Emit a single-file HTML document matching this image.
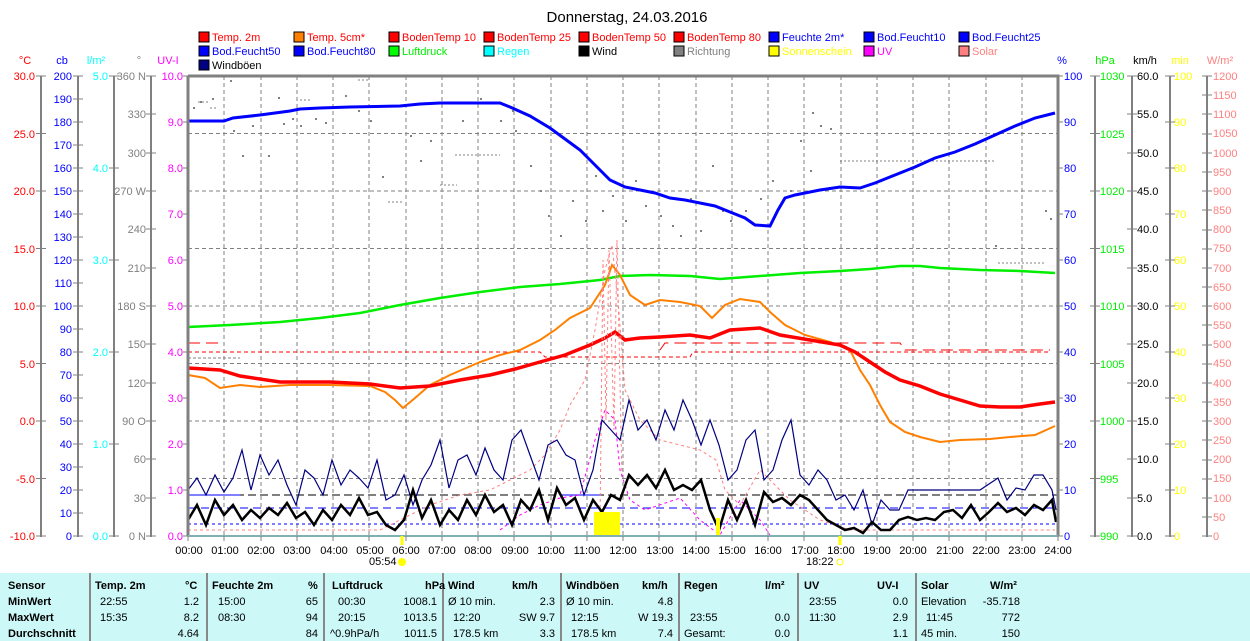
<!DOCTYPE html>
<html><head><meta charset="utf-8"><style>
body{margin:0;background:#fff;width:1250px;height:641px;overflow:hidden;font-family:"Liberation Sans",sans-serif}
svg{position:absolute;left:0;top:0}
svg text{font-family:"Liberation Sans",sans-serif;font-size:11px}
.tb{position:absolute;left:0;top:573px;width:1250px;height:68px;background:#ccf8f8;font-size:11px}
.c{position:absolute;top:0;height:68px;border-left:2px solid #888}
.t{position:absolute;white-space:nowrap}
.b{font-weight:bold}
</style></head><body>
<svg width="1250" height="641" viewBox="0 0 1250 641">
<text x="627" y="22" text-anchor="middle" style="font-size:15px">Donnerstag, 24.03.2016</text>
<g stroke="#000" stroke-width="1">
<rect x="199" y="32" width="10" height="10" fill="#f00"/><rect x="294" y="32" width="10" height="10" fill="#ff8000"/><rect x="389" y="32" width="10" height="10" fill="#f00"/><rect x="484" y="32" width="10" height="10" fill="#f00"/><rect x="579" y="32" width="10" height="10" fill="#f00"/><rect x="674" y="32" width="10" height="10" fill="#f00"/><rect x="769" y="32" width="10" height="10" fill="#00f"/><rect x="864" y="32" width="10" height="10" fill="#00f"/><rect x="959" y="32" width="10" height="10" fill="#00f"/>
<rect x="199" y="46" width="10" height="10" fill="#00f"/><rect x="294" y="46" width="10" height="10" fill="#00f"/><rect x="389" y="46" width="10" height="10" fill="#0f0"/><rect x="484" y="46" width="10" height="10" fill="#0ff"/><rect x="579" y="46" width="10" height="10" fill="#000"/><rect x="674" y="46" width="10" height="10" fill="#808080"/><rect x="769" y="46" width="10" height="10" fill="#ff0"/><rect x="864" y="46" width="10" height="10" fill="#f0f"/><rect x="959" y="46" width="10" height="10" fill="#ff8080"/>
<rect x="199" y="60" width="10" height="10" fill="#000080"/>
</g>
<g>
<text x="212" y="41" fill="#f00">Temp. 2m</text><text x="307" y="41" fill="#f00">Temp. 5cm*</text><text x="402" y="41" fill="#f00">BodenTemp 10</text><text x="497" y="41" fill="#f00">BodenTemp 25</text><text x="592" y="41" fill="#f00">BodenTemp 50</text><text x="687" y="41" fill="#f00">BodenTemp 80</text><text x="782" y="41" fill="#00f">Feuchte 2m*</text><text x="877" y="41" fill="#00f">Bod.Feucht10</text><text x="972" y="41" fill="#00f">Bod.Feucht25</text>
<text x="212" y="55" fill="#00f">Bod.Feucht50</text><text x="307" y="55" fill="#00f">Bod.Feucht80</text><text x="402" y="55" fill="#0e0">Luftdruck</text><text x="497" y="55" fill="#0ff">Regen</text><text x="592" y="55" fill="#000">Wind</text><text x="687" y="55" fill="#808080">Richtung</text><text x="782" y="55" fill="#ff0">Sonnenschein</text><text x="877" y="55" fill="#f0f">UV</text><text x="972" y="55" fill="#ff8080">Solar</text>
<text x="212" y="69" fill="#000">Windböen</text>
</g>
<text x="25" y="64" text-anchor="middle" fill="#f00">°C</text><text x="62" y="64" text-anchor="middle" fill="#00f">cb</text><text x="96" y="64" text-anchor="middle" fill="#0ff">l/m²</text><text x="139" y="64" text-anchor="middle" fill="#808080">°</text><text x="168" y="64" text-anchor="middle" fill="#f0f">UV-I</text>
<text x="1062" y="64" text-anchor="middle" fill="#00f">%</text><text x="1105" y="64" text-anchor="middle" fill="#0e0">hPa</text><text x="1145" y="64" text-anchor="middle" fill="#000">km/h</text><text x="1180" y="64" text-anchor="middle" fill="#ff0">min</text><text x="1220" y="64" text-anchor="middle" fill="#ff8080">W/m²</text>
<g stroke="#808080" stroke-width="2">
<line x1="41" y1="76" x2="41" y2="537"/><line x1="78" y1="76" x2="78" y2="537"/><line x1="114" y1="76" x2="114" y2="537"/><line x1="151" y1="76" x2="151" y2="537"/>
<line x1="1095" y1="76" x2="1095" y2="537"/><line x1="1132" y1="76" x2="1132" y2="537"/><line x1="1170" y1="76" x2="1170" y2="537"/><line x1="1207" y1="76" x2="1207" y2="537"/>
</g>
<g fill="#f00" text-anchor="end">
<text x="35" y="80">30.0</text><text x="35" y="138">25.0</text><text x="35" y="195">20.0</text><text x="35" y="253">15.0</text><text x="35" y="310">10.0</text><text x="35" y="368">5.0</text><text x="35" y="425">0.0</text><text x="35" y="483">-5.0</text><text x="35" y="540">-10.0</text></g>
<g fill="#00f" text-anchor="end">
<text x="72" y="80">200</text><text x="72" y="103">190</text><text x="72" y="126">180</text><text x="72" y="149">170</text><text x="72" y="172">160</text><text x="72" y="195">150</text><text x="72" y="218">140</text><text x="72" y="241">130</text><text x="72" y="264">120</text><text x="72" y="287">110</text><text x="72" y="310">100</text><text x="72" y="333">90</text><text x="72" y="356">80</text><text x="72" y="379">70</text><text x="72" y="402">60</text><text x="72" y="425">50</text><text x="72" y="448">40</text><text x="72" y="471">30</text><text x="72" y="494">20</text><text x="72" y="517">10</text><text x="72" y="540">0</text></g>
<g fill="#0ff" text-anchor="end">
<text x="108" y="80">5.0</text><text x="108" y="172">4.0</text><text x="108" y="264">3.0</text><text x="108" y="356">2.0</text><text x="108" y="448">1.0</text><text x="108" y="540">0.0</text></g>
<g fill="#808080" text-anchor="end">
<text x="146" y="80">360 N</text><text x="146" y="118">330</text><text x="146" y="157">300</text><text x="146" y="195">270 W</text><text x="146" y="233">240</text><text x="146" y="272">210</text><text x="146" y="310">180 S</text><text x="146" y="348">150</text><text x="146" y="387">120</text><text x="146" y="425">90 O</text><text x="146" y="463">60</text><text x="146" y="502">30</text><text x="146" y="540">0 N</text></g>
<g fill="#f0f" text-anchor="end">
<text x="183" y="80">10.0</text><text x="183" y="126">9.0</text><text x="183" y="172">8.0</text><text x="183" y="218">7.0</text><text x="183" y="264">6.0</text><text x="183" y="310">5.0</text><text x="183" y="356">4.0</text><text x="183" y="402">3.0</text><text x="183" y="448">2.0</text><text x="183" y="494">1.0</text><text x="183" y="540">0.0</text></g>
<g fill="#00f"><text x="1064" y="80">100</text><text x="1064" y="126">90</text><text x="1064" y="172">80</text><text x="1064" y="218">70</text><text x="1064" y="264">60</text><text x="1064" y="310">50</text><text x="1064" y="356">40</text><text x="1064" y="402">30</text><text x="1064" y="448">20</text><text x="1064" y="494">10</text><text x="1064" y="540">0</text></g>
<g fill="#0e0"><text x="1100" y="80">1030</text><text x="1100" y="138">1025</text><text x="1100" y="195">1020</text><text x="1100" y="253">1015</text><text x="1100" y="310">1010</text><text x="1100" y="368">1005</text><text x="1100" y="425">1000</text><text x="1100" y="483">995</text><text x="1100" y="540">990</text></g>
<g fill="#000"><text x="1137" y="80">60.0</text><text x="1137" y="118">55.0</text><text x="1137" y="157">50.0</text><text x="1137" y="195">45.0</text><text x="1137" y="233">40.0</text><text x="1137" y="272">35.0</text><text x="1137" y="310">30.0</text><text x="1137" y="348">25.0</text><text x="1137" y="387">20.0</text><text x="1137" y="425">15.0</text><text x="1137" y="463">10.0</text><text x="1137" y="502">5.0</text><text x="1137" y="540">0.0</text></g>
<g fill="#ff0"><text x="1174" y="80">100</text><text x="1174" y="126">90</text><text x="1174" y="172">80</text><text x="1174" y="218">70</text><text x="1174" y="264">60</text><text x="1174" y="310">50</text><text x="1174" y="356">40</text><text x="1174" y="402">30</text><text x="1174" y="448">20</text><text x="1174" y="494">10</text><text x="1174" y="540">0</text></g>
<g fill="#ff8080"><text x="1213" y="80">1200</text><text x="1213" y="99">1150</text><text x="1213" y="118">1100</text><text x="1213" y="137">1050</text><text x="1213" y="157">1000</text><text x="1213" y="176">950</text><text x="1213" y="195">900</text><text x="1213" y="214">850</text><text x="1213" y="233">800</text><text x="1213" y="252">750</text><text x="1213" y="272">700</text><text x="1213" y="291">650</text><text x="1213" y="310">600</text><text x="1213" y="329">550</text><text x="1213" y="348">500</text><text x="1213" y="367">450</text><text x="1213" y="387">400</text><text x="1213" y="406">350</text><text x="1213" y="425">300</text><text x="1213" y="444">250</text><text x="1213" y="463">200</text><text x="1213" y="482">150</text><text x="1213" y="502">100</text><text x="1213" y="521">50</text><text x="1213" y="540">0</text></g>
<path stroke="#808080" fill="none" d="M36 76h10M36 133.5h10M36 191h10M36 248.5h10M36 306h10M36 363.5h10M36 421h10M36 478.5h10M36 536h10
M73 76h10M73 99h10M73 122h10M73 145h10M73 168h10M73 191h10M73 214h10M73 237h10M73 260h10M73 283h10M73 306h10M73 329h10M73 352h10M73 375h10M73 398h10M73 421h10M73 444h10M73 467h10M73 490h10M73 513h10M73 536h10
M109 76h10M109 168h10M109 260h10M109 352h10M109 444h10M109 536h10
M146 76h10M146 114h10M146 153h10M146 191h10M146 229h10M146 268h10M146 306h10M146 344h10M146 383h10M146 421h10M146 459h10M146 498h10M146 536h10
M183 76h5M183 122h5M183 168h5M183 214h5M183 260h5M183 306h5M183 352h5M183 398h5M183 444h5M183 490h5M183 536h5
M1058 76h5M1058 122h5M1058 168h5M1058 214h5M1058 260h5M1058 306h5M1058 352h5M1058 398h5M1058 444h5M1058 490h5M1058 536h5
M1090 76h10M1090 133.5h10M1090 191h10M1090 248.5h10M1090 306h10M1090 363.5h10M1090 421h10M1090 478.5h10M1090 536h10
M1127 76h10M1127 114h10M1127 153h10M1127 191h10M1127 229h10M1127 268h10M1127 306h10M1127 344h10M1127 383h10M1127 421h10M1127 459h10M1127 498h10M1127 536h10
M1165 76h10M1165 122h10M1165 168h10M1165 214h10M1165 260h10M1165 306h10M1165 352h10M1165 398h10M1165 444h10M1165 490h10M1165 536h10
M1202 76h10M1202 95h10M1202 114h10M1202 134h10M1202 153h10M1202 172h10M1202 191h10M1202 210h10M1202 230h10M1202 249h10M1202 268h10M1202 287h10M1202 306h10M1202 325h10M1202 345h10M1202 364h10M1202 383h10M1202 402h10M1202 421h10M1202 440h10M1202 460h10M1202 479h10M1202 498h10M1202 517h10M1202 536h10"/>
<path stroke="#808080" stroke-dasharray="4,3" fill="none" d="M224 76V536M261 76V536M297 76V536M333 76V536M369 76V536M406 76V536M442 76V536M478 76V536M514 76V536M551 76V536M587 76V536M623 76V536M659 76V536M696 76V536M732 76V536M768 76V536M804 76V536M841 76V536M877 76V536M913 76V536M949 76V536M986 76V536M1022 76V536
M188 133.5H1058M188 191H1058M188 248.5H1058M188 306H1058M188 363.5H1058M188 421H1058M188 478.5H1058"/>
<path stroke="#000" stroke-dasharray="8,4" d="M188 495H1058"/>
<path stroke="#00f" stroke-dasharray="8,5" d="M188 508H1058"/>
<path stroke="#00f" stroke-dasharray="3,3" d="M188 524H1058"/>
<path stroke="#00f" d="M188 495H240M560 495h40"/>
<path stroke="#f00" stroke-dasharray="12,6" fill="none" d="M188 343H220M660 350L665 343H900L905 350H1050"/>
<path stroke="#f00" stroke-dasharray="4,3" fill="none" d="M188 352H540L545 357H690L693 352H1050"/>
<path stroke="#808080" stroke-dasharray="3,2" d="M188 358H240"/>
<g fill="#808080">
<path stroke="#808080" stroke-dasharray="2,2" fill="none" d="M455 155H500M440 185H457M388 202H402M840 161H995M998 263H1045M198 102h12M210 108h8M300 100h12M358 80h10"/>
<rect x="193" y="107" width="2" height="2"/><rect x="200" y="101" width="2" height="2"/><rect x="212" y="98" width="2" height="2"/><rect x="230" y="80" width="2" height="2"/><rect x="233" y="130" width="2" height="2"/><rect x="242" y="155" width="2" height="2"/><rect x="252" y="125" width="2" height="2"/><rect x="268" y="155" width="2" height="2"/><rect x="278" y="97" width="2" height="2"/><rect x="283" y="123" width="2" height="2"/><rect x="292" y="118" width="2" height="2"/><rect x="300" y="125" width="2" height="2"/><rect x="315" y="118" width="2" height="2"/><rect x="325" y="122" width="2" height="2"/><rect x="345" y="95" width="2" height="2"/><rect x="358" y="110" width="2" height="2"/><rect x="370" y="120" width="2" height="2"/><rect x="382" y="176" width="2" height="2"/><rect x="410" y="135" width="2" height="2"/><rect x="420" y="160" width="2" height="2"/><rect x="430" y="140" width="2" height="2"/><rect x="462" y="120" width="2" height="2"/><rect x="480" y="98" width="2" height="2"/><rect x="500" y="120" width="2" height="2"/><rect x="512" y="110" width="2" height="2"/><rect x="515" y="130" width="2" height="2"/><rect x="530" y="165" width="2" height="2"/><rect x="540" y="190" width="2" height="2"/><rect x="548" y="215" width="2" height="2"/><rect x="560" y="235" width="2" height="2"/><rect x="572" y="200" width="2" height="2"/><rect x="585" y="220" width="2" height="2"/><rect x="595" y="175" width="2" height="2"/><rect x="602" y="210" width="2" height="2"/><rect x="612" y="195" width="2" height="2"/><rect x="625" y="220" width="2" height="2"/><rect x="635" y="180" width="2" height="2"/><rect x="645" y="205" width="2" height="2"/><rect x="660" y="215" width="2" height="2"/><rect x="672" y="225" width="2" height="2"/><rect x="680" y="235" width="2" height="2"/><rect x="690" y="198" width="2" height="2"/><rect x="700" y="230" width="2" height="2"/><rect x="712" y="165" width="2" height="2"/><rect x="722" y="210" width="2" height="2"/><rect x="730" y="220" width="2" height="2"/><rect x="745" y="210" width="2" height="2"/><rect x="760" y="198" width="2" height="2"/><rect x="772" y="180" width="2" height="2"/><rect x="790" y="190" width="2" height="2"/><rect x="800" y="140" width="2" height="2"/><rect x="812" y="112" width="2" height="2"/><rect x="820" y="125" width="2" height="2"/><rect x="830" y="128" width="2" height="2"/><rect x="810" y="170" width="2" height="2"/><rect x="1045" y="210" width="2" height="2"/><rect x="1050" y="218" width="2" height="2"/><rect x="995" y="245" width="2" height="2"/></g>
<polyline fill="none" stroke="#00f" stroke-width="3" points="188,121 224,121 233,118 260,115 290,111 300,109 320,108 350,107 400,106 420,104 440,103 500,103 510,107 530,116 550,128 565,139 580,150 595,165 610,180 625,187 640,190 655,193 670,198 685,200 700,203 715,206 730,212 745,218 755,225 770,226 778,210 785,198 795,195 805,193 820,190 840,187 860,188 875,183 895,175 915,167 935,158 955,152 975,144 995,135 1015,126 1035,118 1055,113"/>
<polyline fill="none" stroke="#0e0" stroke-width="2.5" points="188,327 230,325 280,322 320,318 360,313 400,305 440,298 480,292 520,287 560,284 600,280 620,276 650,275 690,276 720,279 760,276 800,273 840,271 870,269 900,266 920,266 940,268 980,270 1020,271 1055,273"/>
<polyline fill="none" stroke="#ff8000" stroke-width="2" points="188,375 205,378 220,388 240,385 260,387 290,385 330,385 370,386 385,392 395,400 403,408 415,398 430,385 450,375 480,362 500,355 520,350 540,340 555,330 570,318 590,308 605,285 612,265 620,275 630,295 645,305 660,300 680,302 700,306 712,318 725,305 740,299 760,302 770,312 785,325 805,335 830,342 850,350 860,370 870,385 880,405 890,422 905,432 920,437 940,442 960,440 990,439 1010,437 1035,435 1055,426"/>
<polyline fill="none" stroke="#f00" stroke-width="3.5" points="188,368 220,370 240,376 280,382 330,382 370,384 400,388 430,386 460,380 490,375 515,369 540,362 565,355 590,345 605,338 615,332 625,340 640,338 660,337 690,335 710,338 730,330 760,328 780,335 810,340 840,345 855,352 870,362 885,372 900,380 920,386 940,394 960,400 980,406 1000,407 1020,407 1040,404 1055,402"/>
<polyline fill="none" stroke="#ff8080" stroke-dasharray="3,3" points="188,530 380,530 400,520 430,505 460,495 490,490 510,480 530,470 545,455 560,430 570,405 585,380 595,330 605,270 612,245 618,300 625,390 640,420 660,440 680,445 700,450 716,460 725,490 740,505 760,470 790,500 820,520 850,530 1055,530"/>
<polyline fill="none" stroke="#ff8080" stroke-dasharray="3,3" points="600,520 603,260 606,420 609,250 614,430 617,240 622,480"/>
<polyline fill="none" stroke="#f0f" stroke-dasharray="3,3" points="500,530 520,515 540,505 560,498 580,495 595,440 605,410 615,420 620,470 630,500 645,510 680,498 700,520 720,535 740,500 760,520 770,535"/>
<polyline fill="none" stroke="#000080" stroke-width="1.2" points="188,490 197,478 206,495 215,475 224,492 233,478 242,450 251,490 260,455 269,475 278,460 287,485 296,505 305,470 314,478 323,495 332,460 341,485 350,470 359,478 368,488 377,460 386,500 395,495 404,475 413,505 422,480 431,465 440,440 449,488 458,460 467,455 476,475 485,448 494,470 503,480 512,440 521,430 530,455 539,480 548,445 557,440 566,455 575,460 584,495 593,470 602,420 611,430 620,440 629,400 638,430 647,420 656,440 665,410 674,430 683,400 692,420 701,445 710,420 719,445 728,480 737,470 746,440 755,430 764,480 773,470 782,440 791,420 800,475 809,485 818,470 827,480 836,500 845,495 854,510 863,490 872,525 881,500 890,510 899,510 908,490 917,490 926,490 935,490 944,490 962,490 980,490 998,478 1007,500 1016,488 1025,490 1034,475 1043,475 1052,490 1056,510"/>
<polyline fill="none" stroke="#000" stroke-width="2.5" points="188,520 197,505 206,525 215,500 224,515 233,505 242,520 251,510 260,518 269,508 278,515 287,503 296,518 305,512 314,525 323,510 332,520 341,505 350,515 359,498 368,515 377,512 386,525 395,530 404,520 413,490 422,518 431,500 440,525 449,510 458,520 467,500 476,515 485,495 494,512 503,505 512,525 521,500 530,510 539,490 548,520 557,488 566,505 575,498 584,520 593,500 602,512 611,495 620,500 629,475 638,485 647,475 656,488 665,470 674,490 683,485 692,490 701,480 710,510 719,530 728,500 737,520 746,500 755,525 764,492 773,502 782,498 791,505 800,495 809,500 818,510 827,520 836,525 845,530 854,528 863,533 872,522 881,530 890,530 899,520 908,517 917,520 926,518 935,520 944,512 953,510 962,518 971,505 980,520 989,512 998,503 1007,512 1016,508 1025,515 1034,505 1043,510 1052,500 1056,522"/>
<rect x="594" y="512" width="26" height="24" fill="#ff0"/>
<rect x="716" y="518" width="4" height="18" fill="#ff0"/>
<path stroke="#808080" stroke-width="3" fill="none" d="M188 76H1058V536M188 76V536"/>
<line x1="188" y1="536" x2="1058" y2="536" stroke="#80b0b0" stroke-width="2"/>
<path stroke="#808080" d="M188 536v5M224 536v5M261 536v5M297 536v5M333 536v5M369 536v5M406 536v5M442 536v5M478 536v5M514 536v5M551 536v5M587 536v5M623 536v5M659 536v5M696 536v5M732 536v5M768 536v5M804 536v5M841 536v5M877 536v5M913 536v5M949 536v5M986 536v5M1022 536v5M1058 536v5"/>
<g text-anchor="middle">
<text x="189" y="554">00:00</text><text x="225" y="554">01:00</text><text x="261" y="554">02:00</text><text x="297" y="554">03:00</text><text x="334" y="554">04:00</text><text x="370" y="554">05:00</text><text x="406" y="554">06:00</text><text x="442" y="554">07:00</text><text x="478" y="554">08:00</text><text x="515" y="554">09:00</text><text x="551" y="554">10:00</text><text x="587" y="554">11:00</text><text x="623" y="554">12:00</text><text x="660" y="554">13:00</text><text x="696" y="554">14:00</text><text x="732" y="554">15:00</text><text x="768" y="554">16:00</text><text x="805" y="554">17:00</text><text x="841" y="554">18:00</text><text x="877" y="554">19:00</text><text x="913" y="554">20:00</text><text x="950" y="554">21:00</text><text x="986" y="554">22:00</text><text x="1022" y="554">23:00</text><text x="1058" y="554">24:00</text></g>
<line x1="402" y1="536" x2="402" y2="545" stroke="#ff0" stroke-width="3"/>
<line x1="840" y1="536" x2="840" y2="545" stroke="#ff0" stroke-width="3"/>
<text x="369" y="565">05:54</text><circle cx="402" cy="562" r="4" fill="#ff0"/>
<text x="806" y="565">18:22</text><circle cx="840" cy="562" r="3" fill="none" stroke="#ff0"/>
</svg>
<div class="tb">
<div class="c" style="left:89px"></div><div class="c" style="left:206px"></div><div class="c" style="left:323px"></div><div class="c" style="left:442px"></div><div class="c" style="left:560px"></div><div class="c" style="left:678px"></div><div class="c" style="left:797px"></div><div class="c" style="left:915px"></div>
<div class="t b" style="left:8px;top:7px">Sensor</div><div class="t b" style="left:8px;top:23px">MinWert</div><div class="t b" style="left:8px;top:39px">MaxWert</div><div class="t b" style="left:8px;top:55px">Durchschnitt</div>
<div class="t b" style="left:95px;top:7px">Temp. 2m</div><div class="t b" style="left:185px;top:7px">°C</div>
<div class="t" style="left:100px;top:23px">22:55</div><div class="t" style="right:1051px;top:23px">1.2</div>
<div class="t" style="left:100px;top:39px">15:35</div><div class="t" style="right:1051px;top:39px">8.2</div>
<div class="t" style="right:1051px;top:55px">4.64</div>
<div class="t b" style="left:212px;top:7px">Feuchte 2m</div><div class="t b" style="left:308px;top:7px">%</div>
<div class="t" style="left:218px;top:23px">15:00</div><div class="t" style="right:932px;top:23px">65</div>
<div class="t" style="left:218px;top:39px">08:30</div><div class="t" style="right:932px;top:39px">94</div>
<div class="t" style="right:932px;top:55px">84</div>
<div class="t b" style="left:332px;top:7px">Luftdruck</div><div class="t b" style="left:425px;top:7px">hPa</div>
<div class="t" style="left:338px;top:23px">00:30</div><div class="t" style="right:813px;top:23px">1008.1</div>
<div class="t" style="left:338px;top:39px">20:15</div><div class="t" style="right:813px;top:39px">1013.5</div>
<div class="t" style="left:330px;top:55px">^0.9hPa/h</div><div class="t" style="right:813px;top:55px">1011.5</div>
<div class="t b" style="left:448px;top:7px">Wind</div><div class="t b" style="left:512px;top:7px">km/h</div>
<div class="t" style="left:448px;top:23px">Ø 10 min.</div><div class="t" style="right:695px;top:23px">2.3</div>
<div class="t" style="left:453px;top:39px">12:20</div><div class="t" style="right:695px;top:39px">SW 9.7</div>
<div class="t" style="left:453px;top:55px">178.5 km</div><div class="t" style="right:695px;top:55px">3.3</div>
<div class="t b" style="left:566px;top:7px">Windböen</div><div class="t b" style="left:642px;top:7px">km/h</div>
<div class="t" style="left:566px;top:23px">Ø 10 min.</div><div class="t" style="right:577px;top:23px">4.8</div>
<div class="t" style="left:571px;top:39px">12:15</div><div class="t" style="right:577px;top:39px">W 19.3</div>
<div class="t" style="left:571px;top:55px">178.5 km</div><div class="t" style="right:577px;top:55px">7.4</div>
<div class="t b" style="left:684px;top:7px">Regen</div><div class="t b" style="left:765px;top:7px">l/m²</div>
<div class="t" style="left:690px;top:39px">23:55</div><div class="t" style="right:460px;top:39px">0.0</div>
<div class="t" style="left:684px;top:55px">Gesamt:</div><div class="t" style="right:460px;top:55px">0.0</div>
<div class="t b" style="left:804px;top:7px">UV</div><div class="t b" style="left:877px;top:7px">UV-I</div>
<div class="t" style="left:809px;top:23px">23:55</div><div class="t" style="right:342px;top:23px">0.0</div>
<div class="t" style="left:809px;top:39px">11:30</div><div class="t" style="right:342px;top:39px">2.9</div>
<div class="t" style="right:342px;top:55px">1.1</div>
<div class="t b" style="left:921px;top:7px">Solar</div><div class="t b" style="left:990px;top:7px">W/m²</div>
<div class="t" style="left:921px;top:23px">Elevation</div><div class="t" style="right:230px;top:23px">-35.718</div>
<div class="t" style="left:926px;top:39px">11:45</div><div class="t" style="right:230px;top:39px">772</div>
<div class="t" style="left:921px;top:55px">45 min.</div><div class="t" style="right:230px;top:55px">150</div>
</div>
</body></html>
